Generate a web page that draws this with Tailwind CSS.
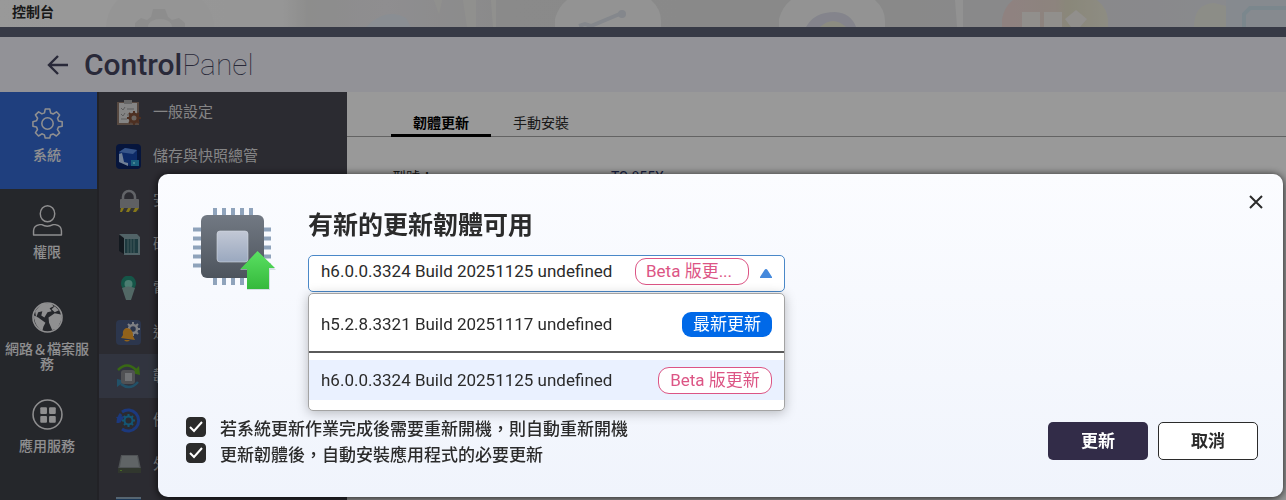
<!DOCTYPE html>
<html lang="zh-Hant">
<head>
    <meta charset="UTF-8">
    <meta name="viewport" content="width=device-width, initial-scale=1.0">
    <title>控制台 - ControlPanel</title>
    <!-- Tailwind CSS -->
    <script src="https://cdn.jsdelivr.net/npm/@tailwindcss/browser@4"></script>
</head>
<body class="h-screen overflow-hidden bg-white font-[Roboto,'Noto_Sans_CJK_TC',sans-serif] text-[#2b2b2b]">

    <div class="flex h-full flex-col overflow-hidden">
        <!-- Window title bar, desktop shows through -->
        <div class="relative h-[27px] shrink-0 overflow-hidden bg-[#ebebea]">
            <svg class="absolute left-0 top-0 h-[27px] w-[1286px]" viewBox="0 0 1286 27" fill="none">
                <defs>
                    <linearGradient id="desk" x1="0" x2="1">
                        <stop offset="0" stop-color="#fff"/><stop offset=".22" stop-color="#fafafa"/><stop offset=".24" stop-color="#ebebea"/><stop offset=".3" stop-color="#eeedf0"/><stop offset=".4" stop-color="#e6e6e6"/><stop offset=".66" stop-color="#e4e4e4"/><stop offset=".9" stop-color="#e4e5e9"/><stop offset="1" stop-color="#e4e9ef"/>
                    </linearGradient>
                    <linearGradient id="market" x1="0" x2="1">
                        <stop offset=".1" stop-color="#eed9d6"/><stop offset=".5" stop-color="#ebdcd2"/><stop offset=".62" stop-color="#e6e2cb"/><stop offset="1" stop-color="#eceada"/>
                    </linearGradient>
                </defs>
                <path fill="url(#desk)" d="M0 0h1286v27H0z"/>
                <path fill="#f8f8f8" d="M106 27C107 15 111 7 118 0h84c7 7 12 15 12 27z"/>
                <path fill="#ebebeb" d="m135 23 6-5 6 2 4-3 2-8h12l3 8 4 3 7-2 6 5v4h-50z"/>
                <path fill="#f7f7f7" d="M148 27a12 8 0 0 1 24 0z"/>
                <path fill="#e6edf5" d="M366 27q20-20 40-9l5 9z"/>
                <path fill="#f1f1ed" d="M434 0h8l-3 14zM463 0h13v27h-9zM491 0h5v27h-3z"/>
                <path fill="#f5f6f5" d="M555 27V19Q558 7 567 0h84q10 9 10 21v6z"/>
                <path stroke="#dce1e9" stroke-width="4" d="m579 26 6-2 6 2 31-13"/>
                <circle cx="622" cy="14" r="4" fill="#dce1e9"/>
                <path fill="#f5f6f5" d="M779 27V19Q782 7 791 0h84q10 9 10 21v6z"/>
                <path fill="#dcdde9" d="M806 27q8-15 29-15 16 1 21 15z"/>
                <path fill="#eae9d8" d="M820 27q13-12 26 0z"/>
                <path fill="#f3f3f3" d="M955 0h8v27h-6z"/>
                <path fill="url(#market)" d="M1002 27v-8q2-12 11-19h84q11 9 11 21v6z"/>
                <path fill="#f2eeea" d="M1022 12h18v15h-18zM1044 12h18v15h-18zM1065 19l11-9 11 9-7 8h-9z"/>
                <path fill="#eaebe1" d="M1194 27q0-23 20-24l12 3v21z"/>
                <path fill="#dfe6ee" d="M1226 0h60v27h-60z"/>
                <path stroke="#cde2ec" stroke-width="4" d="M1244 27V14l6-6h36"/>
            </svg>
            <p class="relative pl-3 text-sm leading-6 font-bold">控制台</p>
        </div>
        <div class="h-2.5 shrink-0 bg-[#5c6175]"></div>

        <!-- Header -->
        <header class="flex h-[55px] shrink-0 items-center gap-4 bg-[#f3f3fc] pl-[47px] text-[#45455f]">
            <a href="#" aria-label="返回">
                <svg class="h-[22px] w-[21px]" viewBox="0 0 21 22" fill="none" stroke="currentColor" stroke-width="2.4"><path d="M11 2 2 11l9 9M2 11h19"/></svg>
            </a>
            <h1 class="text-[30px] leading-9 font-thin"><span class="font-medium">Control</span>Panel</h1>
        </header>

        <div class="flex min-h-0 grow">
            <!-- Main categories -->
            <nav class="w-[97px] shrink-0 bg-[#3f4148] text-center text-sm leading-[15px] font-medium text-[#eeeef0]">
                <a href="#" class="flex h-[97px] flex-col items-center gap-[9px] bg-[#3469d2] pt-4 pr-[3px]">
                    <svg class="size-[31px] shrink-0" viewBox="0 0 30 30" fill="none" stroke="currentColor" stroke-width="1.5" stroke-linejoin="round"><path d="M12.8 1h4.4l.8 3.8 2.5 1 3.2-2.1 3 3.1-2 3.2 1 2.5 3.5.7v4.4l-3.6.8-1 2.5 2.1 3.2-3.1 3-3.2-2-2.5 1-.7 3h-4.4l-.8-3.1-2.5-1-3.2 2.1-3-3.1 2-3.2-1-2.5-3.4-.7v-4.4l3.5-.8 1-2.5-2.1-3.2 3.1-3 3.2 2 2.5-1z"/><circle cx="15" cy="15" r="5.5"/></svg>
                    <span>系統</span>
                </a>
                <a href="#" class="flex h-[97px] flex-col items-center gap-[9px] pt-4 pr-[3px]">
                    <svg class="size-[31px] shrink-0" viewBox="0 0 30 30" fill="none" stroke="currentColor" stroke-width="1.4"><ellipse cx="15" cy="8.5" rx="7" ry="7.8"/><path d="M1.5 29v-4q0-5 6-6h2q5 3 11 0h2q6 1 6 6v4z" stroke-linejoin="round"/></svg>
                    <span>權限</span>
                </a>
                <a href="#" class="flex h-[97px] flex-col items-center gap-[9px] pt-4 pr-[3px]">
                    <svg class="size-[31px] shrink-0" viewBox="0 0 30 30"><circle cx="15" cy="15" r="14" fill="none" stroke="currentColor" stroke-width="1.6"/><path fill="currentColor" d="M3 9 9 2l9-1 3 3-4 2 2 3-4 1-3 5-3-2 1-4-4 1-2 5zM2 13l4 2 4 3 3 2-2 4-1 4q-6-3-8-12zM16 15l6-4 6 1 .5 5-4 9-5 1-3-7zM22 4l4 4-4 2-3-3z"/></svg>
                    <span>網路＆檔案服務</span>
                </a>
                <a href="#" class="flex h-[97px] flex-col items-center gap-[9px] pt-4 pr-[3px]">
                    <svg class="size-[31px] shrink-0" viewBox="0 0 30 30" fill="currentColor"><circle cx="15" cy="15" r="14" fill="none" stroke="currentColor" stroke-width="1.5"/><rect x="8" y="8" width="6.5" height="6.5" rx="1"/><rect x="16.5" y="8" width="6.5" height="6.5" rx="1"/><rect x="8" y="16.5" width="6.5" height="6.5" rx="1"/><rect x="16.5" y="16.5" width="6.5" height="6.5" rx="1"/></svg>
                    <span>應用服務</span>
                </a>
            </nav>

            <!-- Settings in the selected category -->
            <nav class="w-[250px] shrink-0 overflow-hidden border-l-2 border-[#3a3940] bg-[#494852] text-[15px] text-[#dededf]">
                <ul class="-mt-0.5">
                    <li><a href="#" class="flex h-11 items-center gap-3 pl-[17px]">
                        <svg class="size-[25px]" viewBox="0 0 25 25"><path fill="#927a6d" d="M1 2h22v23H1z"/><path fill="#dedede" d="M3 3h18v20H3z"/><path fill="#aaa" d="M8 0h8v4H8z"/><path stroke="#9a9a9a" fill="none" d="m5 8 2 2 2-3m2 2h7M5 14l2 2 2-3m2 2h6M5 19h6"/><circle cx="18" cy="18" r="4" fill="#b5aaa3" stroke="#80503a" stroke-width="3"/><path stroke="#80503a" stroke-width="2" d="M18 11v3m0 8v3m-7-7h3m8 0h3m-12-5 2 2m6 6 2 2m0-10-2 2m-6 6-2 2"/></svg>
                        一般設定</a></li>
                    <li><a href="#" class="flex h-11 items-center gap-3 pl-[17px]">
                        <svg class="size-[25px]" viewBox="0 0 25 25"><rect width="25" height="25" rx="4" fill="#0b2364"/><path fill="#1747ac" d="m3 8 6-4 12 2v12l-7 4-11-4z"/><path fill="#5c8ee4" d="m9 4 12 2-4 4L3 8z"/><path fill="#bdd6fa" d="m3 10 3-1 2 9 4 1v3l-9-4z"/><path fill="#2a9fd1" d="M15 16h8v6h-8z"/><path fill="#76ddf4" d="M17 18h2v2h-2z"/></svg>
                        儲存與快照總管</a></li>
                    <li><a href="#" class="flex h-11 items-center gap-3 pl-[17px]">
                        <svg class="size-[25px]" viewBox="0 0 25 25"><path d="M7 12V9a6 6 0 0 1 12 0v3" fill="none" stroke="#a4a7ae" stroke-width="2.5"/><rect x="4" y="11" width="19" height="12" rx="1" fill="#9fa1a6"/><path fill="#555" d="M4 20h19v3H4z"/><path fill="#e0c72b" d="m5 20h3l-2 4H4zM12 20h3l-2 4h-3zM19 20h4l-3 4h-3z"/></svg>
                        安全</a></li>
                    <li><a href="#" class="flex h-11 items-center gap-3 pl-[17px]">
                        <svg class="size-[25px]" viewBox="0 0 25 25"><path fill="#202a34" d="m3 3 5 3v16l-5-3z"/><path fill="#87a6ac" d="M3 2h18l3 3v18H8V6z"/><path fill="#31616a" d="M9 7h13v14H9z"/><path stroke="#74999c" d="M12 7v14m3-14v14m3-14v14"/></svg>
                        硬體</a></li>
                    <li><a href="#" class="flex h-11 items-center gap-3 pl-[17px]">
                        <svg class="size-[25px]" viewBox="0 0 25 25"><path fill="#248f79" d="M5 7a7.5 7.5 0 0 1 15 0c0 5-3 5-3 10H8C8 12 5 12 5 7"/><circle cx="12.5" cy="8" r="4" fill="#7ed0bc"/><path fill="#89ada9" d="M6 12q6-3 13 0l-4 12h-5z"/></svg>
                        電源</a></li>
                    <li><a href="#" class="flex h-11 items-center gap-3 pl-[17px]">
                        <svg class="size-[25px]" viewBox="0 0 25 25"><rect width="25" height="25" rx="4" fill="#4a5a80"/><circle cx="17" cy="9" r="4" fill="none" stroke="#d2d4db" stroke-width="2.5"/><path stroke="#d2d4db" stroke-width="2" d="M17 2v3m0 8v3m-7-7h3m8 0h3m-12-5 2 2m6 6 2 2m0-10-2 2m-6 6-2 2"/><path fill="#f3a42c" d="M10 8q7 0 7 8l2 4-14-2 2-3q-1-5 3-7M8 20h6q-3 3-6 0"/></svg>
                        通知</a></li>
                    <li><a href="#" class="flex h-11 items-center gap-3 bg-[#525869] pl-[17px]">
                        <svg class="size-[25px]" viewBox="0 0 25 25"><path fill="none" stroke="#5fae23" stroke-width="2.5" d="M2 6q9-9 18 0"/><path fill="#5fae23" d="m23 2 1 9-8-2z"/><path fill="none" stroke="#3a87ad" stroke-width="2.5" d="M5 20q9 7 17-2"/><path fill="#3a87ad" d="m1 23 0-8 8 2z"/><rect x="5" y="6" width="14" height="14" rx="3" fill="#85888d"/><path fill="#bbbec3" d="M9 9h7v8H9z"/></svg>
                        韌體更新</a></li>
                    <li><a href="#" class="flex h-11 items-center gap-3 pl-[17px]">
                        <svg class="size-[25px]" viewBox="0 0 25 25" fill="none"><path stroke="#2f5fd0" stroke-width="3" d="M6 4a10.500 10.500 0 1 1 0 17M2 15q0-5 3-9"/><path fill="#2f5fd0" d="m0 9 9-1-5 7z"/><circle cx="12.5" cy="12.5" r="4" stroke="#2090c4" stroke-width="2"/><path stroke="#2090c4" stroke-width="2" d="M12.500 6v3m0 7v3M6 12.500h3m7 0h3M8 8l2 2m5 5 2 2m0-9-2 2m-5 5-2 2"/></svg>
                        備份/還原</a></li>
                    <li><a href="#" class="flex h-11 items-center gap-3 pl-[17px]">
                        <svg class="size-[25px]" viewBox="0 0 25 25"><path fill="#858b8f" d="M5 3h17l3 14H2z"/><path fill="#a0a7aa" d="M6 4h15l2 11H4z"/><path fill="#525d4d" d="M2 16h23v5H2z"/><path fill="#79b13c" d="M4 18h2v1H4z"/></svg>
                        外接裝置</a></li>
                    <li><a href="#" class="flex h-11 items-center gap-3 pl-[17px]">
                        <svg class="size-[25px]" viewBox="0 0 25 25"><path fill="#2e5e93" d="M0 1h25v22H0z"/><path fill="#8fa8bd" d="M0 1h25v2H0z"/></svg>
                        系統狀態</a></li>
                </ul>
            </nav>

            <!-- Firmware page -->
            <main class="grow text-sm">
                <div class="mt-4 flex h-[29px] border-b border-[#a5a5a5] pl-11">
                    <a href="#" class="h-[29px] w-[100px] border-b-3 border-black text-center leading-[30px] font-bold text-black">韌體更新</a>
                    <a href="#" class="w-[100px] text-center leading-[30px]">手動安裝</a>
                </div>
                <dl class="mt-[30px] flex pl-[45px]">
                    <dt class="w-[219px]">型號：</dt>
                    <dd class="text-[#2c3870]">TS-855X</dd>
                </dl>
            </main>
        </div>
    </div>

    <!-- Update dialog -->
    <div class="fixed inset-0 bg-black/40 pt-[174px] pr-[3px] pl-[158px]">
        <div role="dialog" aria-labelledby="dialog-title" class="relative rounded-[10px] bg-linear-to-b from-[#fbfcff] to-[#f0f4fc] pt-8 pr-[25px] pb-[29px] pl-7 shadow-[0_1px_8px_rgba(0,0,0,0.85)]">
            <button type="button" aria-label="關閉" class="absolute top-[21px] right-5">
                <svg class="size-3.5" viewBox="0 0 14 14" stroke="#2b2b2b" stroke-width="2"><path d="m1 1 12 12M13 1 1 13"/></svg>
            </button>

            <div class="flex gap-8 pl-1.5">
                <svg class="size-[84px] shrink-0" viewBox="0 0 84 84">
                    <defs>
                        <linearGradient id="chip" x2="0" y2="1"><stop stop-color="#727983"/><stop offset="1" stop-color="#4d545d"/></linearGradient>
                        <linearGradient id="core" x2="0" y2="1"><stop stop-color="#c2c8d5"/><stop offset="1" stop-color="#9aa8bf"/></linearGradient>
                        <linearGradient id="up" x2="0" y2="1"><stop stop-color="#5ae062"/><stop offset="1" stop-color="#35b93c"/></linearGradient>
                    </defs>
                    <path stroke="#8fa3bb" stroke-width="4" d="M23 2v77M32 2v77M41 2v77M50 2v77M59 2v77M1 23.500h78M1 32.500h78M1 41.500h78M1 50.500h78M1 59.500h78"/>
                    <rect x="9" y="9" width="63" height="63" rx="6" fill="url(#chip)"/>
                    <rect x="25" y="25" width="31" height="31" rx="3" fill="url(#core)" stroke="#d5dae3" stroke-width=".6"/>
                    <path fill="#bccbd0" d="M55 84V64h-7l18-18 18 18h-6v20z" opacity=".6"/>
                    <path fill="url(#up)" d="M55 83V63h-6.500L65.500 45 83 62h-6v21z"/>
                </svg>
                <div class="w-[477px]">
                    <h2 id="dialog-title" class="text-[25px] leading-10 font-bold">有新的更新韌體可用</h2>
                    <div class="relative mt-[9px] text-[17px] leading-[25px]">
                        <button type="button" id="version" aria-haspopup="listbox" aria-expanded="true" aria-controls="version-list" class="flex h-[37px] w-full items-start rounded-[5px] border border-[#4a88c8] bg-white px-3 pt-0.5 text-left">
                            <span class="grow pt-px">h6.0.0.3324 Build 20251125 undefined</span>
                            <span class="w-[114px] rounded-[11px] border border-[#dc5585] px-2.5 text-[#dc5585]">Beta 版更...</span>
                            <svg class="mt-[11px] ml-[11px] h-[9px] w-3 shrink-0" viewBox="0 0 12 9"><path fill="#4589dc" d="M6 0q1 0 1.500 1L12 8v1H0V8l4.500-7Q5 0 6 0"/></svg>
                        </button>
                        <ul id="version-list" role="listbox" aria-labelledby="version" class="absolute inset-x-0 top-[38px] rounded-[5px] border border-[#a3a3a3] bg-white pt-2.5 pb-2.5 shadow-[0_2px_12px_rgba(0,0,0,0.25)]">
                            <li role="option" class="flex h-10 items-center justify-between px-3">
                                h5.2.8.3321 Build 20251117 undefined
                                <span class="w-[90px] rounded-[9px] bg-[#0069e8] text-center text-white">最新更新</span>
                            </li>
                            <li role="separator" class="mt-[7px] mb-[7px] h-0.5 bg-[#5a5a5a]"></li>
                            <li role="option" aria-selected="true" class="flex h-10 items-center justify-between bg-[#eaf1ff] px-3">
                                h6.0.0.3324 Build 20251125 undefined
                                <span class="w-[114px] rounded-[11px] border border-[#dc5585] bg-white text-center text-[#dc5585]">Beta 版更新</span>
                            </li>
                        </ul>
                    </div>
                </div>
            </div>

            <div class="mt-[124px] flex items-start justify-between text-[17px] leading-[26px]">
                <div class="font-medium">
                    <label class="flex items-start gap-3.5">
                        <span class="mt-px grid size-5">
                            <input type="checkbox" checked class="peer col-start-1 row-start-1 size-5 appearance-none rounded-[4px] border border-[#2b2b2b] checked:bg-[#2b2b2b]">
                            <svg class="pointer-events-none invisible col-start-1 row-start-1 size-5 peer-checked:visible" viewBox="0 0 20 20" fill="none" stroke="#fff" stroke-width="2"><path d="m4 10 4 4 8-9"/></svg>
                        </span>
                        若系統更新作業完成後需要重新開機，則自動重新開機
                    </label>
                    <label class="flex items-start gap-3.5">
                        <span class="mt-px grid size-5">
                            <input type="checkbox" checked class="peer col-start-1 row-start-1 size-5 appearance-none rounded-[4px] border border-[#2b2b2b] checked:bg-[#2b2b2b]">
                            <svg class="pointer-events-none invisible col-start-1 row-start-1 size-5 peer-checked:visible" viewBox="0 0 20 20" fill="none" stroke="#fff" stroke-width="2"><path d="m4 10 4 4 8-9"/></svg>
                        </span>
                        更新韌體後，自動安裝應用程式的必要更新
                    </label>
                </div>
                <div class="flex gap-2.5 pt-1.5 font-bold">
                    <button type="button" class="h-[38px] w-[100px] rounded-[5px] bg-[#322c48] text-white">更新</button>
                    <button type="button" class="h-[38px] w-[100px] rounded-[5px] border border-[#2b2b2b] bg-white">取消</button>
                </div>
            </div>
        </div>
    </div>

</body>
</html>
